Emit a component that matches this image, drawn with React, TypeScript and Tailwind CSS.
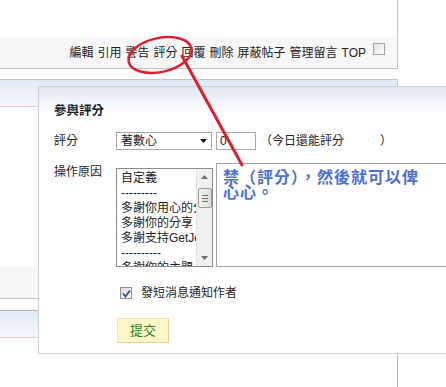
import React from 'react';

const links = ['編輯', '引用', '警告', '評分', '回覆', '刪除', '屏蔽帖子', '管理留言', 'TOP'];

const reasons = ['自定義', '---------', '多謝你用心的分享', '多謝你的分享', '多謝支持GetJetso', '----------', '多謝你的主題'];

function ScrollBar() {
  return (
    <div className="w-[16px] shrink-0 h-full bg-[#f0f0f0] border-l border-[#e2e2e2] flex flex-col items-center">
      <div className="h-[16px] w-full flex items-center justify-center">
        <svg width="7" height="4" viewBox="0 0 7 4">
          <path d="M0 4 L3.5 0 L7 4 Z" fill="#6d6d6d" />
        </svg>
      </div>
      <div className="mt-[3px] w-[14px] h-[20px] rounded-[2px] border border-[#9a9a9a] bg-linear-to-r from-[#f4f4f4] to-[#dcdcdc] flex flex-col items-center justify-center gap-[2px]">
        <div className="w-[6px] h-px bg-[#707070]" />
        <div className="w-[6px] h-px bg-[#707070]" />
        <div className="w-[6px] h-px bg-[#707070]" />
      </div>
      <div className="flex-1" />
      <div className="h-[16px] w-full flex items-center justify-center">
        <svg width="7" height="4" viewBox="0 0 7 4">
          <path d="M0 0 L3.5 4 L7 0 Z" fill="#6d6d6d" />
        </svg>
      </div>
    </div>
  );
}

export default function App() {
  return (
    <div className="relative w-[446px] h-[387px] overflow-hidden bg-white text-[12px] text-[#222] font-['Liberation_Sans','Noto_Sans_CJK_TC',sans-serif]">
      {/* page behind the popup */}
      <div className="w-[398px] h-[69px] border-r border-b border-[#c4c4c4] flex flex-col">
        <div className="h-[37px]" />
        <div className="flex-1 bg-[#f7f7f7] flex items-center justify-end pr-[12px] gap-[4px]">
          {links.map((l) => (
            <span key={l} className="leading-[16px]">{l}</span>
          ))}
          <div className="self-start mt-[6px] ml-[3px] w-[12px] h-[12px] border border-[#a4a4a4] bg-linear-to-br from-[#e4e4e4] to-[#fafafa]" />
        </div>
      </div>

      <div className="mt-[10px] w-[398px] h-[220px] border-t border-r border-b border-[#c4c4c4] flex flex-col">
        <div className="h-[27px] bg-linear-to-b from-[#e2e9f6] to-[#f5f7fb] border-b border-[#f1c9cc]" />
        <div className="flex-1" />
        <div className="h-[31px] bg-[#f7f7f7]" />
      </div>

      <div className="mt-[11px] w-[398px] h-[80px] border-t border-r border-[#b4b4b4] flex flex-col">
        <div className="h-[27px] bg-linear-to-b from-[#e2e9f6] to-[#f5f7fb] border-b border-[#f1c9cc]" />
      </div>

      {/* rating popup */}
      <div className="absolute left-[38px] top-[86px] w-[430px] h-[268px] border border-[#c9d1dc] bg-white">
        <div className="h-[26px] bg-linear-to-b from-[#dfe6f1] to-white" />
        <div className="-mt-[26px] pl-[15px] pt-[16px]">
          <div className="font-bold leading-[16px] text-[12.5px]">參與評分</div>

          <div className="mt-[13px] flex items-center">
            <div className="w-[62px] shrink-0 leading-[18px]">評分</div>
            <div className="w-[96px] shrink-0 h-[18px] border border-[#a8a8a8] flex items-center pl-[4px] pr-[4px]">
              <span className="flex-1 leading-[16px]">著數心</span>
              <svg width="7" height="4" viewBox="0 0 7 4">
                <path d="M0 0 L3.5 4 L7 0 Z" fill="#111" />
              </svg>
            </div>
            <div className="ml-[4px] shrink-0 w-[40px] h-[18px] border border-[#a8a8a8] pl-[3px] leading-[16px]">0</div>
            <div className="ml-[4px] shrink-0 whitespace-nowrap leading-[18px]">（今日還能評分　　　）</div>
          </div>

          <div className="mt-[13px] flex items-start">
            <div className="w-[62px] shrink-0 pt-[1px] leading-[16px]">操作原因</div>
            <div className="mt-[5px] shrink-0 w-[97px] h-[99px] border border-[#8c8c8c] flex overflow-hidden">
              <div className="w-[79px] shrink-0 overflow-hidden pl-[4px] pt-[2px]">
                {reasons.map((r, i) => (
                  <div key={i} className="leading-[15px] whitespace-nowrap">{r}</div>
                ))}
              </div>
              <ScrollBar />
            </div>
            <div className="ml-[3px] shrink-0 w-[300px] h-[104px] border border-[#a3a3a3] pl-[6px] pt-[6px] text-[16px] leading-[15px] tracking-[1px] font-bold text-[#4d6fd4]">
              禁（評分），然後就可以俾
              <br />
              心心。
            </div>
          </div>

          <div className="mt-[18px] ml-[66px] flex items-center gap-[9px]">
            <div className="w-[12px] h-[12px] border border-[#8e8f8f] bg-linear-to-br from-[#dcdcdc] to-[#f6f6f6] flex items-center justify-center">
              <svg width="9" height="9" viewBox="0 0 9 9">
                <path d="M1 4.5 L3.5 7.5 L8 1.5" fill="none" stroke="#3c4f86" strokeWidth="1.8" />
              </svg>
            </div>
            <span className="leading-[16px]">發短消息通知作者</span>
          </div>

          <div className="mt-[17px] ml-[63px] w-[52px] h-[25px] bg-[#fff6c8] border border-[#f0e4a6] border-r-[#e2d48c] border-b-[#e2d48c] flex items-center justify-center text-[13px] text-[#1e8a1e]">
            提交
          </div>
        </div>
      </div>

      {/* red annotation */}
      <svg className="absolute left-0 top-0 pointer-events-none" width="446" height="387" viewBox="0 0 446 387">
        <ellipse cx="160" cy="55" rx="32" ry="17" transform="rotate(-12 160 55)" fill="none" stroke="#dc1f2b" strokeWidth="2.5" />
        <path d="M182 56 L242 165" stroke="#dc1f2b" strokeWidth="3" strokeLinecap="round" />
      </svg>
    </div>
  );
}
